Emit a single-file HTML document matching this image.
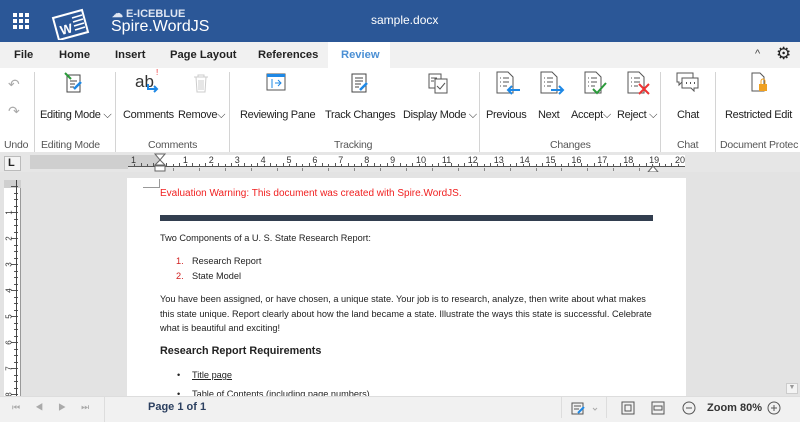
<!DOCTYPE html>
<html><head><meta charset="utf-8"><style>
*{margin:0;padding:0;box-sizing:border-box}
body{width:800px;height:422px;overflow:hidden;font-family:"Liberation Sans",Arial,sans-serif;background:#fff;position:relative;color:#222}
.a{position:absolute;white-space:nowrap}
#hdr{left:0;top:0;width:800px;height:42px;background:#2b5797}
#tabs{left:0;top:42px;width:800px;height:26px;background:#f1f1f1}
.tab{font-size:11.2px;font-weight:bold;top:49px;color:#222}
.lbl{font-size:11px;letter-spacing:-0.3px;top:109px;color:#222}
.grp{font-size:10.5px;letter-spacing:-0.2px;top:139px;color:#555}
.sep{width:1px;background:#d4d4d4;top:72px;height:80px}
.doc{font-family:"Liberation Sans",sans-serif;font-size:9.2px;color:#222}
.rn{font-size:9px;color:#333;top:155px}
</style></head><body>
<div id="hdr" class="a"></div>
<svg class="a" style="left:13px;top:13px" width="16" height="16"><g fill="#fff">
<rect x="0" y="0" width="4" height="4"/><rect x="6" y="0" width="4" height="4"/><rect x="12" y="0" width="4" height="4"/>
<rect x="0" y="6" width="4" height="4"/><rect x="6" y="6" width="4" height="4"/><rect x="12" y="6" width="4" height="4"/>
<rect x="0" y="12" width="4" height="4"/><rect x="6" y="12" width="4" height="4"/><rect x="12" y="12" width="4" height="4"/></g></svg>
<svg class="a" style="left:50px;top:4px" width="46" height="36"><g fill="none" stroke="#fff" stroke-width="2"><path d="M3 14 L32 6 L38 28 L9 36 Z"/></g>
<text x="10" y="30" fill="#fff" font-size="13" font-weight="bold" font-family="Liberation Sans" transform="rotate(-14 15 25)">W</text>
<g stroke="#fff" stroke-width="1.5"><path d="M22 14 L32 11 M23 18 L33 15 M24 22 L34 19 M25 26 L35 23"/></g></svg>
<div class="a" style="left:112px;top:7px;color:#dfe6f2;font-size:11px;font-weight:bold">☁ E-ICEBLUE</div>
<div class="a" style="left:111px;top:18px;color:#fff;font-size:16px">Spire.WordJS</div>
<div class="a" style="left:371px;top:13px;color:#fff;font-size:12px">sample.docx</div>

<div id="tabs" class="a"></div>
<div class="a" style="left:328px;top:42px;width:62px;height:26px;background:#fff"></div>
<div class="a tab" style="left:14px">File</div>
<div class="a tab" style="left:59px">Home</div>
<div class="a tab" style="left:115px">Insert</div>
<div class="a tab" style="left:170px">Page Layout</div>
<div class="a tab" style="left:258px">References</div>
<div class="a tab" style="left:341px;color:#4a8fd4">Review</div>
<div class="a" style="left:755px;top:48px;font-size:11px;color:#444">^</div>
<div class="a" style="left:776px;top:44px;font-size:17px;color:#222">⚙</div>

<div class="a" style="left:8px;top:76px;color:#aaa;font-size:14px">↶</div>
<div class="a" style="left:8px;top:103px;color:#aaa;font-size:14px">↷</div>
<div class="a sep" style="left:34px"></div><div class="a sep" style="left:115px"></div><div class="a sep" style="left:229px"></div>
<div class="a sep" style="left:479px"></div><div class="a sep" style="left:660px"></div><div class="a sep" style="left:715px"></div>
<svg class="a" style="left:64px;top:72px" width="20" height="22"><path d="M3 3h13v17H3z" fill="none" stroke="#444"/><path d="M6 9h7M6 12h5M6 15h4" stroke="#444"/><path d="M1 1l6 6" stroke="#2a9a3a" stroke-width="2"/><path d="M10 17l7-7" stroke="#1e88e5" stroke-width="2.5"/></svg>
<div class="a" style="left:135px;top:72px;font-size:17px;color:#333">ab</div>
<div class="a" style="left:156px;top:68px;font-size:8px;color:#e33">!</div>
<svg class="a" style="left:146px;top:84px" width="14" height="10"><path d="M2 0v5h9M8 2l3 3-3 3" stroke="#1e88e5" stroke-width="2" fill="none"/></svg>
<svg class="a" style="left:193px;top:73px" width="16" height="20"><path d="M1 4h14M5 4V2h6v2M3 4l1 15h8l1-15M6 7v10M8 7v10M10 7v10" stroke="#ccc" fill="none"/></svg>
<svg class="a" style="left:266px;top:73px" width="20" height="18"><rect x="1" y="1" width="18" height="16" fill="none" stroke="#555"/><rect x="1" y="1" width="18" height="3" fill="#1e88e5"/><path d="M6 6v9M9 10h6M12 7l3 3-3 3" stroke="#1e88e5" fill="none"/></svg>
<svg class="a" style="left:350px;top:72px" width="20" height="22"><path d="M2 2h14v18H2z" fill="none" stroke="#444"/><path d="M5 6h8M5 9h8M5 12h6M5 15h4" stroke="#444"/><path d="M10 18l7-7" stroke="#1e88e5" stroke-width="2.5"/></svg>
<svg class="a" style="left:427px;top:72px" width="22" height="22"><path d="M2 2h12v14H2z" fill="none" stroke="#555"/><path d="M8 7h12v14H8z" fill="#fff" stroke="#555"/><path d="M10 14l3 3 5-6" stroke="#555" fill="none"/><path d="M4 6h6M4 9h3" stroke="#555"/></svg>
<svg class="a" style="left:494px;top:70px" width="28" height="26"><path d="M3 2h11l5 5v16H3z" fill="none" stroke="#555"/><path d="M6 8h1M9 8h6M6 12h1M9 12h6M6 16h1M9 16h4" stroke="#555"/><path d="M26 20H14M18 16l-4 4 4 4" stroke="#1e88e5" stroke-width="2" fill="none"/></svg>
<svg class="a" style="left:538px;top:70px" width="28" height="26"><path d="M3 2h11l5 5v16H3z" fill="none" stroke="#555"/><path d="M6 8h1M9 8h6M6 12h1M9 12h6M6 16h1M9 16h4" stroke="#555"/><path d="M13 20h12M21 16l4 4-4 4" stroke="#1e88e5" stroke-width="2" fill="none"/></svg>
<svg class="a" style="left:582px;top:70px" width="28" height="26"><path d="M3 2h11l5 5v16H3z" fill="none" stroke="#555"/><path d="M6 8h1M9 8h6M6 12h1M9 12h6M6 16h1M9 16h4" stroke="#555"/><path d="M11 19l4 4 9-10" stroke="#2a9a3a" stroke-width="2" fill="none"/></svg>
<svg class="a" style="left:625px;top:70px" width="28" height="26"><path d="M3 2h11l5 5v16H3z" fill="none" stroke="#555"/><path d="M6 8h1M9 8h6M6 12h1M9 12h6M6 16h1M9 16h4" stroke="#555"/><path d="M14 14l10 10M24 14l-10 10" stroke="#e33" stroke-width="2"/></svg>
<svg class="a" style="left:676px;top:72px" width="24" height="20"><path d="M1 1h16v9H6l-3 3V10H1z" fill="none" stroke="#555"/><path d="M6 6h16v10h-4v3l-3-3H6z" fill="#fff" stroke="#555"/><path d="M10 11h1M14 11h1M18 11h1" stroke="#555" stroke-width="2"/></svg>
<svg class="a" style="left:750px;top:71px" width="20" height="22"><path d="M2 2h8l4 4v14H2z" fill="none" stroke="#555"/><rect x="9" y="13" width="8" height="7" fill="#f0a020"/><path d="M11 13v-3a2 2 0 014 0v3" stroke="#f0a020" fill="none"/></svg>

<div class="a lbl" style="left:40px">Editing Mode ⌵</div>
<div class="a lbl" style="left:123px">Comments</div>
<div class="a lbl" style="left:178px">Remove⌵</div>
<div class="a lbl" style="left:240px">Reviewing Pane</div>
<div class="a lbl" style="left:325px">Track Changes</div>
<div class="a lbl" style="left:403px">Display Mode ⌵</div>
<div class="a lbl" style="left:486px">Previous</div>
<div class="a lbl" style="left:538px">Next</div>
<div class="a lbl" style="left:571px">Accept⌵</div>
<div class="a lbl" style="left:617px">Reject ⌵</div>
<div class="a lbl" style="left:677px">Chat</div>
<div class="a lbl" style="left:725px">Restricted Edit</div>
<div class="a grp" style="left:4px">Undo</div>
<div class="a grp" style="left:41px">Editing Mode</div>
<div class="a grp" style="left:148px">Comments</div>
<div class="a grp" style="left:334px">Tracking</div>
<div class="a grp" style="left:550px">Changes</div>
<div class="a grp" style="left:677px">Chat</div>
<div class="a grp" style="left:720px">Document Protec</div>

<div class="a" style="left:0;top:152px;width:800px;height:20px;background:#e6e6e6"></div>
<div class="a" style="left:4px;top:156px;width:17px;height:15px;border:1px solid #bbb;background:#f4f4f4;font-size:11px;font-weight:bold;line-height:12px;padding-left:3px">L</div>
<div class="a" style="left:30px;top:155px;width:98px;height:14px;background:#cfcfcf"></div>
<div class="a" style="left:128px;top:155px;width:32px;height:12px;background:#cfcfcf"></div>
<div class="a" style="left:160px;top:155px;width:525px;height:12px;background:#fff"></div>
<div class="a" style="left:128px;top:166px;width:557px;height:1px;background:#555"></div>
<div id="rul"></div>
<svg class="a" style="left:154px;top:153px" width="12" height="20"><path d="M1 1h10L6 7z" fill="#fff" stroke="#666"/><path d="M6 7L1 12h10z" fill="#fff" stroke="#666"/><rect x="1" y="13" width="10" height="5" fill="#fff" stroke="#666"/></svg>
<svg class="a" style="left:647px;top:165px" width="12" height="8"><path d="M6 1L1 7h10z" fill="#fff" stroke="#666"/></svg>

<div class="a" style="left:0;top:172px;width:800px;height:224px;background:#e3e3e3"></div>
<div class="a" style="left:4px;top:180px;width:17px;height:216px;background:#fff;border-right:1px solid #999"></div>
<div class="a" style="left:4px;top:180px;width:17px;height:8px;background:#cfcfcf"></div>
<div id="vr"></div>
<div class="a" style="left:127px;top:178px;width:559px;height:218px;background:#fff"></div>
<div class="a" style="left:143px;top:179px;width:17px;height:9px;border-right:1px solid #999;border-bottom:1px solid #999"></div>
<div class="a" style="left:786px;top:172px;width:14px;height:224px;background:#e3e3e3"></div>
<div class="a" style="left:786px;top:383px;width:12px;height:11px;background:#f4f4f4;border:1px solid #ccc;font-size:7px;color:#999;text-align:center">▼</div>

<div class="a doc" style="left:160px;top:188px;color:#f02020;font-size:10px">Evaluation Warning: This document was created with Spire.WordJS.</div>
<div class="a" style="left:160px;top:215px;width:493px;height:6px;background:#323e4f"></div>
<div class="a doc" style="left:160px;top:233px">Two Components of a U. S. State Research Report:</div>
<div class="a doc" style="left:176px;top:256px;color:#d02020">1.</div><div class="a doc" style="left:192px;top:256px">Research Report</div>
<div class="a doc" style="left:176px;top:271px;color:#d02020">2.</div><div class="a doc" style="left:192px;top:271px">State Model</div>
<div class="a doc" style="left:160px;top:292px;line-height:14.5px">You have been assigned, or have chosen, a unique state. Your job is to research, analyze, then write about what makes<br>this state unique. Report clearly about how the land became a state. Illustrate the ways this state is successful. Celebrate<br>what is beautiful and exciting!</div>
<div class="a doc" style="left:160px;top:345px;font-size:10.8px;font-weight:bold">Research Report Requirements</div>
<div class="a doc" style="left:177px;top:370px">•</div><div class="a doc" style="left:192px;top:370px;text-decoration:underline">Title page</div>
<div class="a doc" style="left:177px;top:389px">•</div><div class="a doc" style="left:192px;top:389px">Table of Contents (including page numbers)</div>

<div class="a" style="left:0;top:396px;width:800px;height:26px;background:#f1f1f1;border-top:1px solid #ddd"></div>
<div class="a" style="left:12px;top:402px;font-size:9px;color:#aaa;letter-spacing:15px">⏮◀▶⏭</div>
<div class="a" style="left:104px;top:396px;width:1px;height:26px;background:#ddd"></div>
<div class="a" style="left:148px;top:401px;font-size:11px;font-weight:bold;color:#2b3f5f">Page 1 of 1</div>
<div class="a" style="left:561px;top:396px;width:1px;height:22px;background:#ddd"></div>
<div class="a" style="left:606px;top:396px;width:1px;height:22px;background:#ddd"></div>
<svg class="a" style="left:571px;top:402px" width="30" height="14"><rect x="1" y="1" width="11" height="11" fill="none" stroke="#555"/><path d="M3 4h7M3 7h5" stroke="#555"/><path d="M7 11l6-6" stroke="#1e88e5" stroke-width="2"/><path d="M22 6l2 2 2-2" stroke="#aaa" fill="none"/></svg>
<svg class="a" style="left:621px;top:401px" width="14" height="14"><rect x="1" y="1" width="12" height="12" fill="none" stroke="#555"/><rect x="4" y="4" width="6" height="6" fill="none" stroke="#555"/></svg>
<svg class="a" style="left:651px;top:401px" width="14" height="14"><rect x="1" y="1" width="12" height="12" fill="none" stroke="#555"/><rect x="3" y="5" width="8" height="4" fill="none" stroke="#555"/></svg>
<svg class="a" style="left:682px;top:401px" width="14" height="14"><circle cx="7" cy="7" r="6" fill="none" stroke="#555"/><path d="M4 7h6" stroke="#555"/></svg>
<div class="a" style="left:707px;top:402px;font-size:11px;font-weight:bold;color:#333">Zoom 80%</div>
<svg class="a" style="left:767px;top:401px" width="14" height="14"><circle cx="7" cy="7" r="6" fill="none" stroke="#555"/><path d="M4 7h6M7 4v6" stroke="#555"/></svg>
<script>
var r='';
for(var i=-1;i<=20;i++){if(i==0)continue;var x=160+i*25.9;
 if(i<0)x=134; r+='<div class="a rn" style="left:'+(x-3)+'px">'+(i<0?1:i)+'</div>';}
for(var k=0;k<88;k++){var x=134+k*6.475;if(x>684)break;r+='<div class="a" style="left:'+x.toFixed(1)+'px;top:'+(k%2?163:164)+'px;width:1px;height:'+(k%2?3:2)+'px;background:#555"></div>';}
for(var k=1;k<20;k++){r+='<div class="a" style="left:'+(160+k*25.9-13).toFixed(0)+'px;top:168px;width:1px;height:3px;background:#888"></div>';}
document.getElementById('rul').outerHTML=r;
var v='';for(var k=0;k<40;k++){var y=186+k*6.5;if(y>394)break;v+='<div class="a" style="left:'+(k%4==0?11:14)+'px;top:'+y.toFixed(0)+'px;width:'+(k%4==0?7:4)+'px;height:1px;background:#555"></div>';}
for(var n=1;n<=8;n++){v+='<div class="a" style="left:7px;top:'+(186+n*26-4)+'px;font-size:8px;color:#333;transform:rotate(-90deg)">'+n+'</div>';}
v+='<div class="a" style="left:16px;top:180px;width:1px;height:216px;background:#444"></div>';
document.getElementById('vr').outerHTML=v;
</script>
</body></html>
